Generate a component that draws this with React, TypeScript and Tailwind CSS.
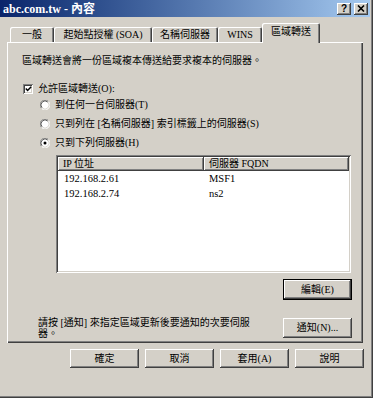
import type { ReactNode } from 'react'

const RAISED =
  'shadow-[inset_-1px_-1px_0_#404040,inset_1px_1px_0_#ffffff,inset_-2px_-2px_0_#808080,inset_2px_2px_0_#d4d0c8]'
const SUNKEN =
  'shadow-[inset_1px_1px_0_#808080,inset_-1px_-1px_0_#ffffff,inset_2px_2px_0_#404040,inset_-2px_-2px_0_#d4d0c8]'

function Button({ children, width = 'w-[69px]', height = 'h-[19px]', isDefault = false }: { children: ReactNode; width?: string; height?: string; isDefault?: boolean }) {
  if (isDefault) {
    return (
      <div className={`${width} ${height} border border-black bg-[#d4d0c8]`}>
        <div className={`w-full h-full ${RAISED} flex items-center justify-center`}>{children}</div>
      </div>
    )
  }
  return (
    <div className={`${width} ${height} bg-[#d4d0c8] ${RAISED} flex items-center justify-center`}>{children}</div>
  )
}

function Tab({ label, width, selected = false }: { label: string; width: string; selected?: boolean }) {
  if (selected) {
    return (
      <div
        className={`${width} h-[20px] -mb-[1px] relative z-10 bg-[#d4d0c8] rounded-t-[2px] shadow-[inset_1px_1px_0_#ffffff,inset_-1px_0_0_#404040,inset_-2px_0_0_#808080] flex items-center justify-center pb-[2px]`}
      >
        {label}
      </div>
    )
  }
  return (
    <div
      className={`${width} h-[15px] bg-[#d4d0c8] rounded-t-[2px] shadow-[inset_1px_1px_0_#ffffff,inset_-1px_0_0_#404040,inset_-2px_0_0_#808080] flex items-center justify-center`}
    >
      {label}
    </div>
  )
}

function Radio({ checked = false }: { checked?: boolean }) {
  return (
    <svg width="10" height="10" viewBox="0 0 12 12" className="shrink-0">
      <circle cx="6" cy="6" r="5.5" fill="#ffffff" />
      <path d="M10.2 1.8 A5.5 5.5 0 0 0 1.8 10.2" stroke="#808080" strokeWidth="1" fill="none" />
      <path d="M9.4 2.6 A4.5 4.5 0 0 0 2.6 9.4" stroke="#404040" strokeWidth="1" fill="none" />
      <path d="M1.8 10.2 A5.5 5.5 0 0 0 10.2 1.8" stroke="#ffffff" strokeWidth="1" fill="none" />
      <path d="M2.6 9.4 A4.5 4.5 0 0 0 9.4 2.6" stroke="#d4d0c8" strokeWidth="1" fill="none" />
      {checked && <circle cx="6" cy="6" r="1.8" fill="#000000" />}
    </svg>
  )
}

export default function App() {
  return (
    <div className="w-[373px] h-[398px] bg-[#d4d0c8] overflow-hidden text-black text-[10px] leading-[12px] font-['Liberation_Serif','Noto_Sans_CJK_TC',serif] shadow-[inset_-1px_-1px_0_#404040,inset_-2px_-2px_0_#808080]">
      {/* Title bar */}
      <div className="h-[17px] mr-[3px] bg-linear-to-r from-[#0a246a] to-[#a6caf0] flex items-center pl-[3px] pr-[2px]">
        <span className="text-white font-bold text-[12px] leading-none">abc.com.tw - 內容</span>
        <div className="ml-auto flex gap-[3px]">
          <div className={`w-[14px] h-[12px] bg-[#d4d0c8] ${RAISED} flex items-center justify-center font-bold text-[10px] leading-none font-['Liberation_Sans',sans-serif]`}>
            ?
          </div>
          <div className={`w-[14px] h-[12px] bg-[#d4d0c8] ${RAISED} flex items-center justify-center`}>
            <svg width="8" height="7" viewBox="0 0 8 7">
              <path d="M1 0.5 L7 6.5 M7 0.5 L1 6.5" stroke="#000000" strokeWidth="1.6" />
            </svg>
          </div>
        </div>
      </div>

      {/* Tabs */}
      <div className="flex items-end h-[19px] mt-[6px] pl-[10px]">
        <Tab label="一般" width="w-[44px]" />
        <Tab label="起始點授權 (SOA)" width="w-[98px]" />
        <Tab label="名稱伺服器" width="w-[66px]" />
        <Tab label="WINS" width="w-[44px]" />
        <Tab label="區域轉送" width="w-[58px]" selected />
      </div>

      {/* Panel */}
      <div className="ml-[7px] w-[356px] h-[301px] pl-[15px] pt-[13px] shadow-[inset_1px_1px_0_#ffffff,inset_-1px_-1px_0_#404040,inset_-2px_-2px_0_#808080]">
        <div className="h-[12px]">區域轉送會將一份區域複本傳送給要求複本的伺服器。</div>

        <div className="flex items-center h-[12px] mt-[16px] gap-[5px] ml-[1px]">
          <div className={`w-[10px] h-[10px] bg-white ${SUNKEN} flex items-center justify-center`}>
            <svg width="7" height="6" viewBox="0 0 7 6">
              <path d="M0.8 2.6 L2.6 4.5 L6.2 0.8" stroke="#000000" strokeWidth="1.5" fill="none" />
            </svg>
          </div>
          <span>允許區域轉送(O):</span>
        </div>

        <div className="ml-[18px]">
          <div className="flex items-center h-[12px] mt-[4px] gap-[5px]">
            <Radio />
            <span>到任何一台伺服器(T)</span>
          </div>
          <div className="flex items-center h-[12px] mt-[7px] gap-[5px]">
            <Radio />
            <span>只到列在 [名稱伺服器] 索引標籤上的伺服器(S)</span>
          </div>
          <div className="flex items-center h-[12px] mt-[7px] gap-[5px]">
            <Radio checked />
            <span>只到下列伺服器(H)</span>
          </div>
        </div>

        {/* List view */}
        <div className={`ml-[34px] mt-[6px] w-[295px] h-[118px] bg-white ${SUNKEN} p-[2px]`}>
          <div className="flex h-[14px]">
            <div className={`w-[146px] h-full bg-[#d4d0c8] ${RAISED} pl-[5px] flex items-center`}>IP 位址</div>
            <div className={`flex-1 h-full bg-[#d4d0c8] ${RAISED} pl-[5px] flex items-center`}>伺服器 FQDN</div>
          </div>
          {[
            ['192.168.2.61', 'MSF1'],
            ['192.168.2.74', 'ns2'],
          ].map(([ip, name]) => (
            <div key={ip} className="flex h-[15px] items-center text-[10.5px]">
              <div className="w-[146px] pl-[6px]">{ip}</div>
              <div className="pl-[5px]">{name}</div>
            </div>
          ))}
        </div>

        <div className="flex justify-end mt-[6px] pr-[11px]">
          <Button height="h-[21px]" isDefault>
            編輯(E)
          </Button>
        </div>

        <div className="flex items-center mt-[17px] pr-[11px]">
          <div className="ml-[16px] leading-[11px]">
            請按 [通知] 來指定區域更新後要通知的次要伺服
            <br />
            器。
          </div>
          <div className="ml-auto">
            <Button height="h-[20px]">通知(N)...</Button>
          </div>
        </div>
      </div>

      {/* Bottom buttons */}
      <div className="flex gap-[6px] mt-[6px] pl-[70px]">
        <Button>確定</Button>
        <Button>取消</Button>
        <Button>套用(A)</Button>
        <Button>說明</Button>
      </div>
    </div>
  )
}
